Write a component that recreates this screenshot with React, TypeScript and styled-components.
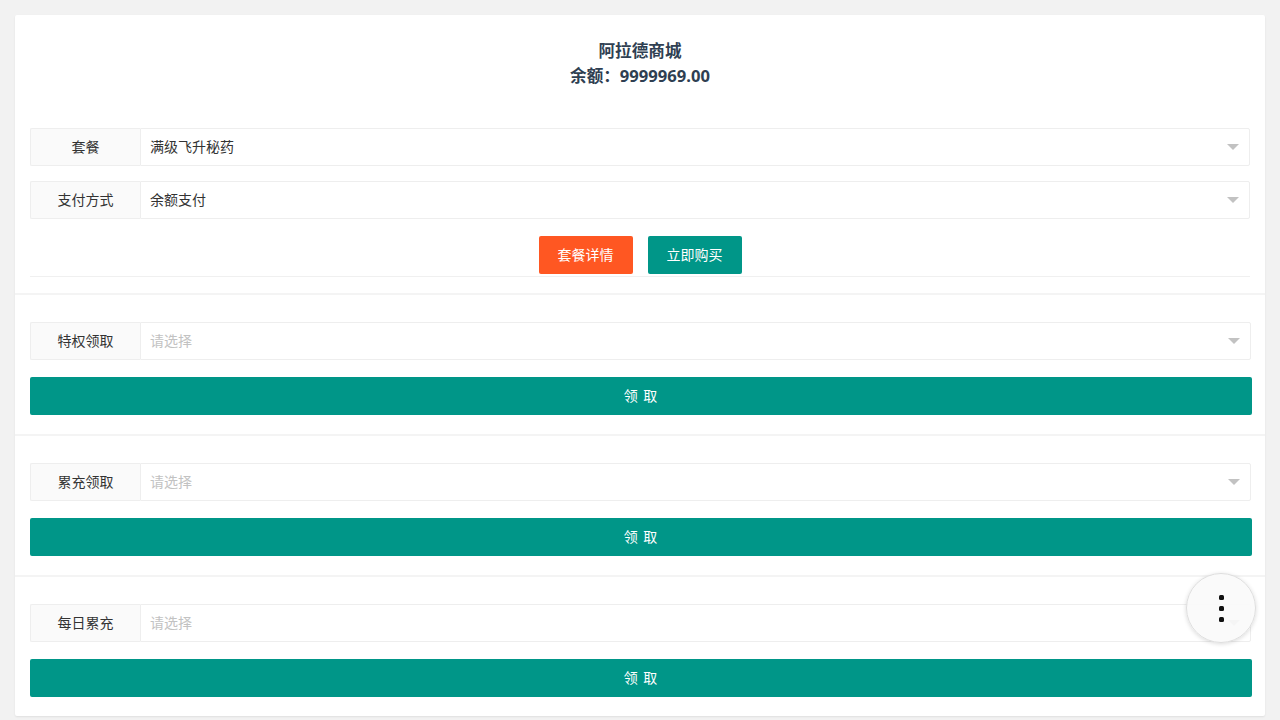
import React from "react";
import styled, { createGlobalStyle } from "styled-components";

const Global = createGlobalStyle`
  html, body { margin: 0; padding: 0; background: #f2f2f2; }
  body { font-family: "Noto Sans", "Noto Sans CJK SC", sans-serif; color: #333; font-size: 14px; }
  * { box-sizing: border-box; }
`;

const Page = styled.div`
  padding: 15px;
  min-height: 720px;
`;

const Card = styled.div`
  background: #fff;
  border-radius: 2px;
  box-shadow: 0 1px 2px 0 rgba(0, 0, 0, 0.08);
  display: flex;
  flex-direction: column;
`;

const Section = styled.div<{ $first?: boolean }>`
  padding: ${(p) => (p.$first ? "23px 15px 16px" : "27px 14px 19px 15px")};
  border-top: ${(p) => (p.$first ? "none" : "2px solid #f4f4f4")};
  display: flex;
  flex-direction: column;
`;

const Title = styled.div`
  text-align: center;
  font-weight: 700;
  font-size: 16.6px;
  line-height: 25px;
  color: #2f3f52;
  margin-bottom: 40px;
`;

const Row = styled.div<{ $mb: number }>`
  display: flex;
  height: 38px;
  margin-bottom: ${(p) => p.$mb}px;
`;

const Label = styled.div`
  width: 110px;
  flex: none;
  display: flex;
  align-items: center;
  justify-content: center;
  padding-bottom: 2px;
  background: #fafafa;
  border: 1px solid #eee;
  border-right: none;
  border-radius: 2px 0 0 2px;
  color: #333;
`;

const Select = styled.div<{ $placeholder?: boolean }>`
  flex: 1;
  display: flex;
  align-items: center;
  padding: 0 10px 2px 9px;
  border: 1px solid #eee;
  border-radius: 0 2px 2px 0;
  color: ${(p) => (p.$placeholder ? "#c2c2c2" : "#333")};
  position: relative;
`;

const Arrow = styled.span`
  position: absolute;
  right: 10px;
  top: 50%;
  margin-top: -3px;
  width: 0;
  height: 0;
  border-left: 6px solid transparent;
  border-right: 6px solid transparent;
  border-top: 6px solid #c2c2c2;
`;

const ButtonBar = styled.div`
  display: flex;
  justify-content: center;
  gap: 15px;
  padding-bottom: 2px;
  border-bottom: 1px solid #f0f0f0;
`;

const Btn = styled.button<{ $color: string }>`
  height: 38px;
  padding: 0 19px 2px;
  border: none;
  border-radius: 2px;
  background: ${(p) => p.$color};
  color: #fff;
  font-family: inherit;
  font-size: 14px;
  cursor: pointer;
`;

const WideBtn = styled(Btn)`
  width: calc(100% + 1px);
  margin-right: -1px;
  letter-spacing: 1px;
`;

const Fab = styled.div`
  position: fixed;
  left: 1186px;
  top: 573px;
  width: 70px;
  height: 70px;
  border-radius: 50%;
  background: rgba(250, 250, 250, 0.92);
  border: 1px solid #ddd;
  box-shadow: 0 1px 4px rgba(0, 0, 0, 0.15);
  display: flex;
  flex-direction: column;
  align-items: center;
  justify-content: center;
  gap: 6px;
`;

const Dot = styled.span`
  width: 5px;
  height: 5px;
  border-radius: 1.5px;
  background: #111;
`;

function SelectRow({ label, value, mb }: { label: string; value?: string; mb: number }) {
  return (
    <Row $mb={mb}>
      <Label>{label}</Label>
      <Select $placeholder={!value}>
        {value || "请选择"}
        <Arrow />
      </Select>
    </Row>
  );
}

export default function App() {
  return (
    <Page>
      <Global />
      <Card>
        <Section $first>
          <Title>
            阿拉德商城
            <br />
            余额：9999969.00
          </Title>
          <SelectRow label="套餐" value="满级飞升秘药" mb={15} />
          <SelectRow label="支付方式" value="余额支付" mb={17} />
          <ButtonBar>
            <Btn $color="#FF5722">套餐详情</Btn>
            <Btn $color="#009688">立即购买</Btn>
          </ButtonBar>
        </Section>
        {["特权领取", "累充领取", "每日累充"].map((l) => (
          <Section key={l}>
            <SelectRow label={l} mb={17} />
            <WideBtn $color="#009688">领 取</WideBtn>
          </Section>
        ))}
      </Card>
      <Fab>
        <Dot />
        <Dot />
        <Dot />
      </Fab>
    </Page>
  );
}
